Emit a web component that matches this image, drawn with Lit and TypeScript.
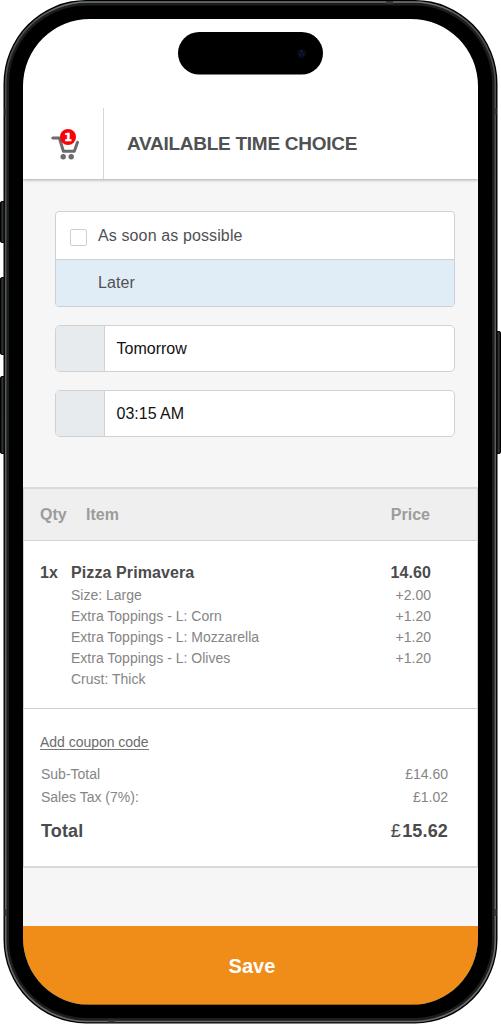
import { LitElement, html, css } from "lit";
import { customElement } from "lit/decorators.js";

interface Line {
  label: string;
  price: string;
}

const extras: Line[] = [
  { label: "Size: Large", price: "+2.00" },
  { label: "Extra Toppings - L: Corn", price: "+1.20" },
  { label: "Extra Toppings - L: Mozzarella", price: "+1.20" },
  { label: "Extra Toppings - L: Olives", price: "+1.20" },
  { label: "Crust: Thick", price: "" },
];

@customElement("app-root")
export class AppRoot extends LitElement {
  static styles = css`
    :host {
      display: block;
      position: relative;
      width: 501px;
      height: 1024px;
      padding: 19px 23px;
      box-sizing: border-box;
      overflow: hidden;
      background: #fff;
      font-family: "Liberation Sans", Arial, sans-serif;
      color: #505152;
    }
    * {
      box-sizing: border-box;
    }
    .frame {
      position: absolute;
      inset: 0;
      z-index: 2;
      pointer-events: none;
    }
    .screen {
      display: flex;
      flex-direction: column;
      width: 455px;
      height: 986px;
      border-radius: 67px;
      overflow: hidden;
      background: #f6f6f6;
    }
    .header {
      display: flex;
      align-items: flex-end;
      height: 160px;
      flex: none;
      background: #fff;
      box-shadow: 0 1px 3px rgba(0, 0, 0, 0.32);
      z-index: 1;
    }
    .cart {
      width: 81px;
      height: 71px;
      border-right: 1.5px solid #d6d6d6;
      padding: 20px 0 0 27px;
    }
    .title {
      height: 71px;
      line-height: 71px;
      padding-left: 23px;
      font-size: 19px;
      font-weight: bold;
      letter-spacing: -0.27px;
      white-space: nowrap;
    }
    .form {
      display: flex;
      flex-direction: column;
      gap: 18px;
      height: 308px;
      flex: none;
      padding: 32px 23px 0 32px;
    }
    .choices {
      height: 96px;
      border: 1px solid #c9d1db;
      border-radius: 4px;
      overflow: hidden;
      background: #fff;
      font-size: 16px;
      letter-spacing: 0.12px;
    }
    .choice {
      display: flex;
      align-items: center;
      height: 47px;
      padding: 0 0 1px 42px;
    }
    .choice.open {
      padding: 0 0 0 14px;
      gap: 11px;
      height: 48px;
      border-bottom: 1px solid #c9d1db;
    }
    .choice.picked {
      background: #e0edf6;
    }
    .box {
      width: 17px;
      height: 17px;
      border: 1px solid #cfcfcf;
      border-radius: 2px;
      margin-top: 4px;
    }
    .field {
      display: flex;
      height: 47px;
      border: 1px solid #cfd1d3;
      border-radius: 5px;
      overflow: hidden;
      background: #fff;
      color: #111;
      font-size: 16px;
      line-height: 46px;
    }
    .addon {
      width: 49px;
      background: #e7ebee;
      border-right: 1px solid #cfd3d6;
      margin-right: 11.5px;
    }
    .table-head {
      display: flex;
      align-items: center;
      height: 54px;
      flex: none;
      padding: 0 47px 0 16px;
      background: #efefef;
      border: 1px solid #d3d3d3;
      border-top: 2px solid #dadada;
      color: #9c9c9c;
      font-weight: bold;
      font-size: 16px;
    }
    .col-qty {
      width: 46px;
    }
    .grow {
      flex: 1;
    }
    .items {
      height: 168px;
      flex: none;
      background: #fff;
      padding: 21px 46px 0 16px;
      border: solid #d0d0d0;
      border-width: 0 1px 1px 1px;
    }
    .row {
      display: flex;
      justify-content: space-between;
      height: 21.1px;
      line-height: 21px;
      padding-left: 31px;
      font-size: 14px;
      color: #858585;
    }
    .row.main {
      padding-left: 0;
      height: 23px;
      line-height: 22px;
      font-size: 16px;
      font-weight: bold;
      letter-spacing: 0.1px;
      color: #4b4b4c;
    }
    .qty {
      width: 31px;
    }
    .totals {
      height: 159px;
      flex: none;
      background: #fff;
      padding: 23px 29px 0 16px;
      border: solid #d8d8d8;
      border-width: 0 1px 2px 1px;
      font-size: 14px;
      color: #858585;
    }
    .coupon {
      display: inline-block;
      height: 18px;
      line-height: 20px;
      border-bottom: 1px solid #777;
      color: #6d6d6d;
      letter-spacing: -0.03px;
    }
    .sum {
      display: flex;
      justify-content: space-between;
      padding-left: 1px;
      height: 23px;
      line-height: 23px;
    }
    .sum.first {
      margin-top: 13px;
    }
    .sum.total {
      height: 45px;
      line-height: 45px;
      font-size: 18px;
      font-weight: bold;
      letter-spacing: 0.15px;
      color: #4b4b4c;
    }
    .pound {
      font-weight: normal;
      letter-spacing: 1.5px;
      background: radial-gradient(closest-side, #f6f6f6 50%, #fff);
    }
    .save {
      display: flex;
      align-items: center;
      justify-content: center;
      margin-top: auto;
      height: 79px;
      flex: none;
      border-bottom: 1px solid #a4600f;
      background: #f08c18;
      color: #fff;
      font-size: 20px;
      font-weight: bold;
      letter-spacing: 0.1px;
      padding: 2px 0 0 3px;
    }
  `;

  private frame() {
    return html`<svg class="frame" width="501" height="1024" viewBox="0 0 501 1024">
      <defs>
        <linearGradient id="rail" x1="0" x2="0" y1="0" y2="1">
          <stop offset="0" stop-color="#717970" />
          <stop offset="0.02" stop-color="#4b4d50" />
          <stop offset="0.5" stop-color="#5c5e61" />
          <stop offset="1" stop-color="#6b6b6d" />
        </linearGradient>
        <linearGradient id="key" x1="0" x2="1" y1="0" y2="0">
          <stop offset="0" stop-color="#08090a" />
          <stop offset="0.45" stop-color="#35393b" />
          <stop offset="1" stop-color="#111" />
        </linearGradient>
      </defs>
      <g fill="url(#key)" stroke="#000" stroke-width="1">
        <rect x="0.5" y="201.500" width="5" height="41" rx="1.500" />
        <rect x="0.5" y="277.500" width="5" height="77" rx="1.500" />
        <rect x="0.5" y="376.500" width="5" height="77" rx="1.500" />
        <rect x="496.500" y="331.500" width="4" height="122" rx="1.500" />
      </g>
      <path
        fill="#000"
        fill-rule="evenodd"
        d="M86 0H415A82.500 84 0 0 1 497.500 84V939A82.500 84 0 0 1 415 1023.500H86A82.500 84 0 0 1 3.500 939V84A82.500 84 0 0 1 86 0ZM90 19A67 67 0 0 0 23 86V938A67 67 0 0 0 90 1005H411A67 67 0 0 0 478 938V86A67 67 0 0 0 411 19Z"
      />
      <rect x="7" y="3.500" width="487" height="1016.500" rx="80" fill="none" stroke="#1c1d1f" stroke-width="4" />
      <rect x="5.700" y="2" width="489.600" height="1019.500" rx="81.500" fill="none" stroke="url(#rail)" stroke-width="1.600" />
      <g fill="#33363a">
        <rect x="4.500" y="108" width="2.500" height="7" />
        <rect x="494" y="108" width="2.500" height="7" />
        <rect x="4.500" y="909" width="2.500" height="7" />
        <rect x="494" y="909" width="2.500" height="7" />
        <rect x="386" y="1" width="7" height="3" />
        <rect x="108" y="1019.500" width="7" height="3" />
      </g>
      <rect x="178" y="32" width="145" height="42.500" rx="21.250" fill="#000" />
      <circle cx="301.500" cy="53.500" r="4.500" fill="#080a1c" />
      <circle cx="301.500" cy="51.500" r="1.100" fill="#202252" />
      <circle cx="300" cy="54.500" r="1" fill="#191b4c" />
      <circle cx="303.300" cy="54.500" r="1" fill="#191b4c" />
    </svg>`;
  }

  private cart() {
    return html`<svg width="32" height="34" viewBox="50 128 32 34">
      <path
        d="M52.800 137.900H59.300L63.400 151.200H74.300L77.500 142.300"
        fill="none"
        stroke="#6b6b6b"
        stroke-width="3"
        stroke-linecap="round"
        stroke-linejoin="round"
      />
      <circle cx="63.200" cy="156.700" r="2.700" fill="#6b6b6b" />
      <circle cx="71.200" cy="156.700" r="2.700" fill="#6b6b6b" />
      <circle cx="68" cy="137" r="8" fill="#fb0007" />
      <text
        x="68"
        y="141"
        text-anchor="middle"
        font-family="DejaVu Sans"
        font-weight="bold"
        font-size="11"
        fill="#fff"
        stroke="#fff"
        stroke-width="0.500"
      >1</text>
    </svg>`;
  }

  render() {
    return html`
      <main class="screen">
        <header class="header">
          <div class="cart">${this.cart()}</div>
          <div class="title">AVAILABLE TIME CHOICE</div>
        </header>
        <section class="form">
          <div class="choices">
            <div class="choice open"><span class="box"></span>As soon as possible</div>
            <div class="choice picked">Later</div>
          </div>
          <div class="field"><span class="addon"></span>Tomorrow</div>
          <div class="field"><span class="addon"></span>03:15 AM</div>
        </section>
        <div class="table-head">
          <span class="col-qty">Qty</span><span class="grow">Item</span><span>Price</span>
        </div>
        <section class="items">
          <div class="row main">
            <span class="qty">1x</span><span class="grow">Pizza Primavera</span><span>14.60</span>
          </div>
          ${extras.map(
            (e) => html`<div class="row"><span>${e.label}</span><span>${e.price}</span></div>`
          )}
        </section>
        <section class="totals">
          <span class="coupon">Add coupon code</span>
          <div class="sum first"><span>Sub-Total</span><span>£14.60</span></div>
          <div class="sum"><span>Sales Tax (7%):</span><span>£1.02</span></div>
          <div class="sum total">
            <span>Total</span><span><span class="pound">£</span>15.62</span>
          </div>
        </section>
        <div class="save">Save</div>
      </main>
      ${this.frame()}
    `;
  }
}
